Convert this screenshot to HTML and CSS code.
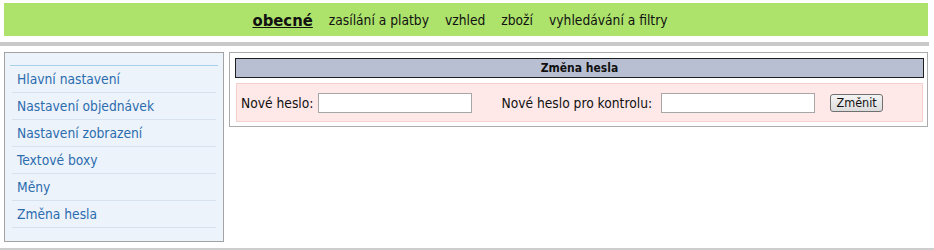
FILE: index.html
```html
<!DOCTYPE html>
<html lang="cs">
<head>
    <meta charset="UTF-8">
    <title>Administrace - Změna hesla</title>
    <link rel="stylesheet" href="styles.css">
</head>
<body>
    <div class="top-menu">
        <a href="#" class="active">obecné</a>
        <a href="#">zasílání a platby</a>
        <a href="#">vzhled</a>
        <a href="#">zboží</a>
        <a href="#">vyhledávání a filtry</a>
    </div>
    <div class="separator"></div>

    <div class="layout">
        <div class="sidebar">
            <ul>
                <li><a href="#">Hlavní nastavení</a></li>
                <li><a href="#">Nastavení objednávek</a></li>
                <li><a href="#">Nastavení zobrazení</a></li>
                <li><a href="#">Textové boxy</a></li>
                <li><a href="#">Měny</a></li>
                <li><a href="#">Změna hesla</a></li>
            </ul>
        </div>

        <div class="content">
            <div class="box-title">Změna hesla</div>
            <form class="password-form">
                <label for="pass1">Nové heslo:</label>
                <input type="password" id="pass1">
                <label for="pass2" class="second">Nové heslo pro kontrolu:</label>
                <input type="password" id="pass2">
                <button type="button">Změnit</button>
            </form>
        </div>
    </div>

    <div class="footer-line"></div>
</body>
</html>
```

FILE: styles.css
```css
body {
    font-family: "DejaVu Sans Condensed", "DejaVu Sans", sans-serif;
    font-stretch: condensed;
    font-size: 13.7px;
    margin: 0;
    background-color: white;
    color: #111;
}

.top-menu {
    margin: 3px 6px 0 4px;
    height: 33px;
    background-color: #ade36b;
    display: flex;
    justify-content: center;
    align-items: center;
    gap: 16px;
    padding-right: 12px;
    padding-top: 1px;
    box-sizing: border-box;
}

.top-menu a {
    color: #111;
    text-decoration: none;
}

.top-menu a.active {
    font-size: 16.5px;
    font-weight: bold;
    text-decoration: underline;
}

.separator {
    margin: 6px 5px 0 0;
    height: 4px;
    background-color: #c9c9c9;
}

.layout {
    display: flex;
    align-items: flex-start;
    gap: 5px;
    margin: 6px 6px 0 4px;
}

.sidebar {
    width: 220px;
    box-sizing: border-box;
    border: 1px solid #a3a3a3;
    background-color: #edf3fb;
    padding: 12px 5px 13px;
}

.sidebar ul {
    list-style: none;
    margin: 0;
    padding: 0;
    border-top: 1px solid #a9d0ea;
}

.sidebar li {
    margin: 0 2px;
    height: 26px;
    line-height: 26px;
    border-bottom: 1px solid #d6e3ee;
}

.sidebar a {
    color: #2b6cae;
    text-decoration: none;
    padding-left: 5px;
}

.content {
    flex: 1;
    border: 1px solid #ababab;
    padding: 5px 2px 4px 5px;
}

.box-title {
    border: 1px solid #1f1f1f;
    background-color: #b9bfd3;
    height: 18px;
    line-height: 18px;
    text-align: center;
    font-size: 12px;
    font-weight: bold;
    margin-right: 1px;
}

.password-form {
    margin: 5px 2px 0 1px;
    height: 37px;
    border: 1px solid #f6cfcf;
    background-color: #fee8e8;
    display: flex;
    align-items: center;
    padding-left: 4px;
}

.password-form label {
    margin-right: 5px;
}

.password-form label.second {
    margin-left: 29px;
    margin-right: 9px;
}

.password-form input {
    width: 154px;
    height: 20px;
    box-sizing: border-box;
    border: 1px solid #a7a7a7;
    background: white;
    padding: 0 2px;
}

.password-form button {
    margin-left: 15px;
    width: 53px;
    height: 18px;
    padding: 0;
    font-family: inherit;
    font-size: 12.5px;
    color: #111;
    border: 1px solid #707070;
    border-radius: 3px;
    background: linear-gradient(#f4f4f4, #dcdcdc);
}

.footer-line {
    margin-top: 6px;
    height: 2px;
    background-color: #cdcdcd;
}
```
